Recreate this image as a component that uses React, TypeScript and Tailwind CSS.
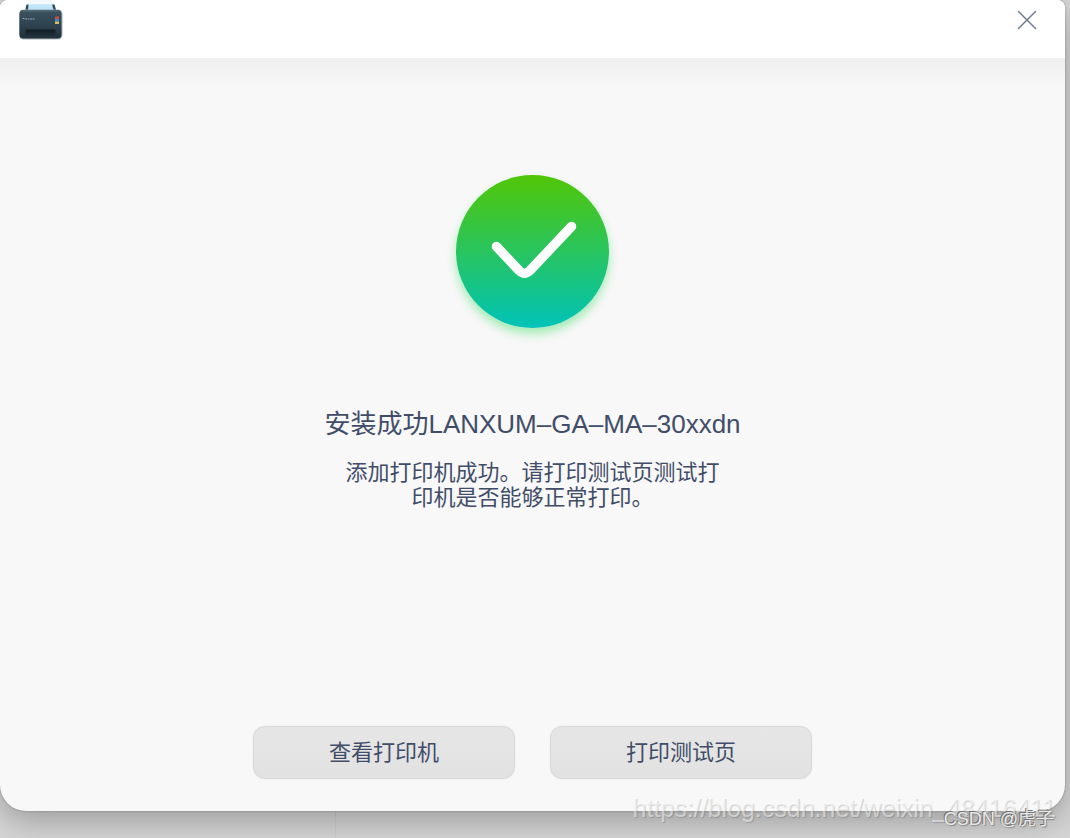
const actions = ['查看打印机', '打印测试页'];

function PrinterIcon() {
  return (
    <svg width="48" height="42" viewBox="0 0 48 42" aria-hidden="true">
      <defs>
        <linearGradient id="printer-body" x1="0" y1="0" x2="0" y2="1">
          <stop offset="0" stopColor="#3c5360" />
          <stop offset="0.6" stopColor="#2c414d" />
          <stop offset="1" stopColor="#1f303a" />
        </linearGradient>
        <linearGradient id="printer-paper" x1="0" y1="0" x2="0" y2="1">
          <stop offset="0" stopColor="#e4f3fe" />
          <stop offset="1" stopColor="#b3ddf6" />
        </linearGradient>
        <linearGradient id="printer-slot" x1="0" y1="0" x2="0" y2="1">
          <stop offset="0" stopColor="#0f1b22" />
          <stop offset="1" stopColor="#23343e" />
        </linearGradient>
      </defs>
      <path d="M9.500 4.500h28l2 7H8z" fill="#2d4653" />
      <path d="M12 0h22l2.500 10H11z" fill="url(#printer-paper)" />
      <path d="M11 0h21l3 4H11z" fill="#f3f9fe" />
      <rect x="2" y="9.500" width="43.500" height="30" rx="4.500" fill="#a9b4ba" />
      <rect x="2.500" y="10" width="42" height="28.500" rx="4" fill="url(#printer-body)" />
      <path d="M6 11h35" stroke="#5b7481" strokeWidth="1" />
      <path d="M5.500 18.500h2M8 19h9.500" stroke="#91a1aa" strokeWidth="1.200" strokeDasharray="2 0.500" />
      <rect x="8.500" y="29.500" width="30" height="7.500" rx="1" fill="url(#printer-slot)" />
      <rect x="38" y="16.500" width="4" height="2.500" fill="#c4513e" />
      <rect x="38" y="19" width="4" height="2.500" fill="#3488c5" />
      <rect x="38" y="21.500" width="4" height="2.500" fill="#d6bd61" />
    </svg>
  );
}

function SuccessIcon() {
  return (
    <div className="flex size-[153px] items-center justify-center rounded-full bg-[linear-gradient(to_bottom,#51c606,#00c3b8)] shadow-[0_6px_10px_rgba(60,220,100,0.45)]">
      <svg width="153" height="153" viewBox="0 0 153 153" fill="none" aria-hidden="true">
        <path
          d="M40.500 71.500L63 95.500Q68.500 101 74 95.500L115.500 51.500"
          stroke="#fff"
          strokeWidth="9.500"
          strokeLinecap="round"
          strokeLinejoin="round"
        />
      </svg>
    </div>
  );
}

export default function App() {
  return (
    <div className="relative flex min-h-screen flex-col overflow-hidden bg-[#d6d6d6] pr-[5px] pb-[27px] font-['Liberation_Sans','Noto_Sans_CJK_SC',sans-serif] text-[#414d68]">
      {/* Edge of the window behind the dialog */}
      <div className="absolute bottom-0 left-0 h-20 w-[336px] border-r border-[#cccccc]" />

      <main className="relative flex flex-1 flex-col overflow-hidden rounded-t-lg rounded-b-[26px] bg-[#f8f8f8] shadow-[0_0_2px_rgba(0,0,0,0.35),0_10px_32px_rgba(0,0,0,0.28)]">
        <header className="flex h-[58px] items-start justify-between bg-white pr-[26px] pl-[17px]">
          <PrinterIcon />
          <button type="button" aria-label="关闭" className="mt-2 flex size-6 items-center justify-center">
            <svg width="20" height="20" viewBox="0 0 20 20" stroke="#6f7b92" strokeWidth="1.500" strokeLinecap="round">
              <path d="M1.500 1.500l17 17M18.500 1.500l-17 17" />
            </svg>
          </button>
        </header>
        <div className="h-[30px] bg-linear-to-b from-[#efefef] to-[#f8f8f8]" />

        <section className="flex flex-1 flex-col items-center pt-[87px] text-center">
          <SuccessIcon />
          <h1 className="mt-20 text-[26px] leading-8">安装成功LANXUM–GA–MA–30xxdn</h1>
          <p className="mt-5 text-[22px] leading-[25px]">
            添加打印机成功。请打印测试页测试打
            <br />
            印机是否能够正常打印。
          </p>
        </section>

        <footer className="flex justify-center gap-[35px] pb-8">
          {actions.map((label) => (
            <button
              key={label}
              type="button"
              className="h-[53px] w-[262px] rounded-xl border border-[#d9d9d9] bg-linear-to-b from-[#e6e6e6] to-[#e2e2e2] text-[22px] shadow-[0_0_1px_#d0d0d0]"
            >
              {label}
            </button>
          ))}
        </footer>
      </main>

      <span className="absolute right-[14px] bottom-[14px] text-[25px] leading-8 text-white/50 [text-shadow:1px_1px_1px_rgba(0,0,0,0.16)]">
        https://blog.csdn.net/weixin_48416411
      </span>
      <span className="absolute right-4 bottom-[7px] text-[18px] leading-6 text-[#e8e8e8] [text-shadow:-1px_-1px_0_#707070,1px_1px_1px_#888888]">
        CSDN @虎子
      </span>
    </div>
  );
}
